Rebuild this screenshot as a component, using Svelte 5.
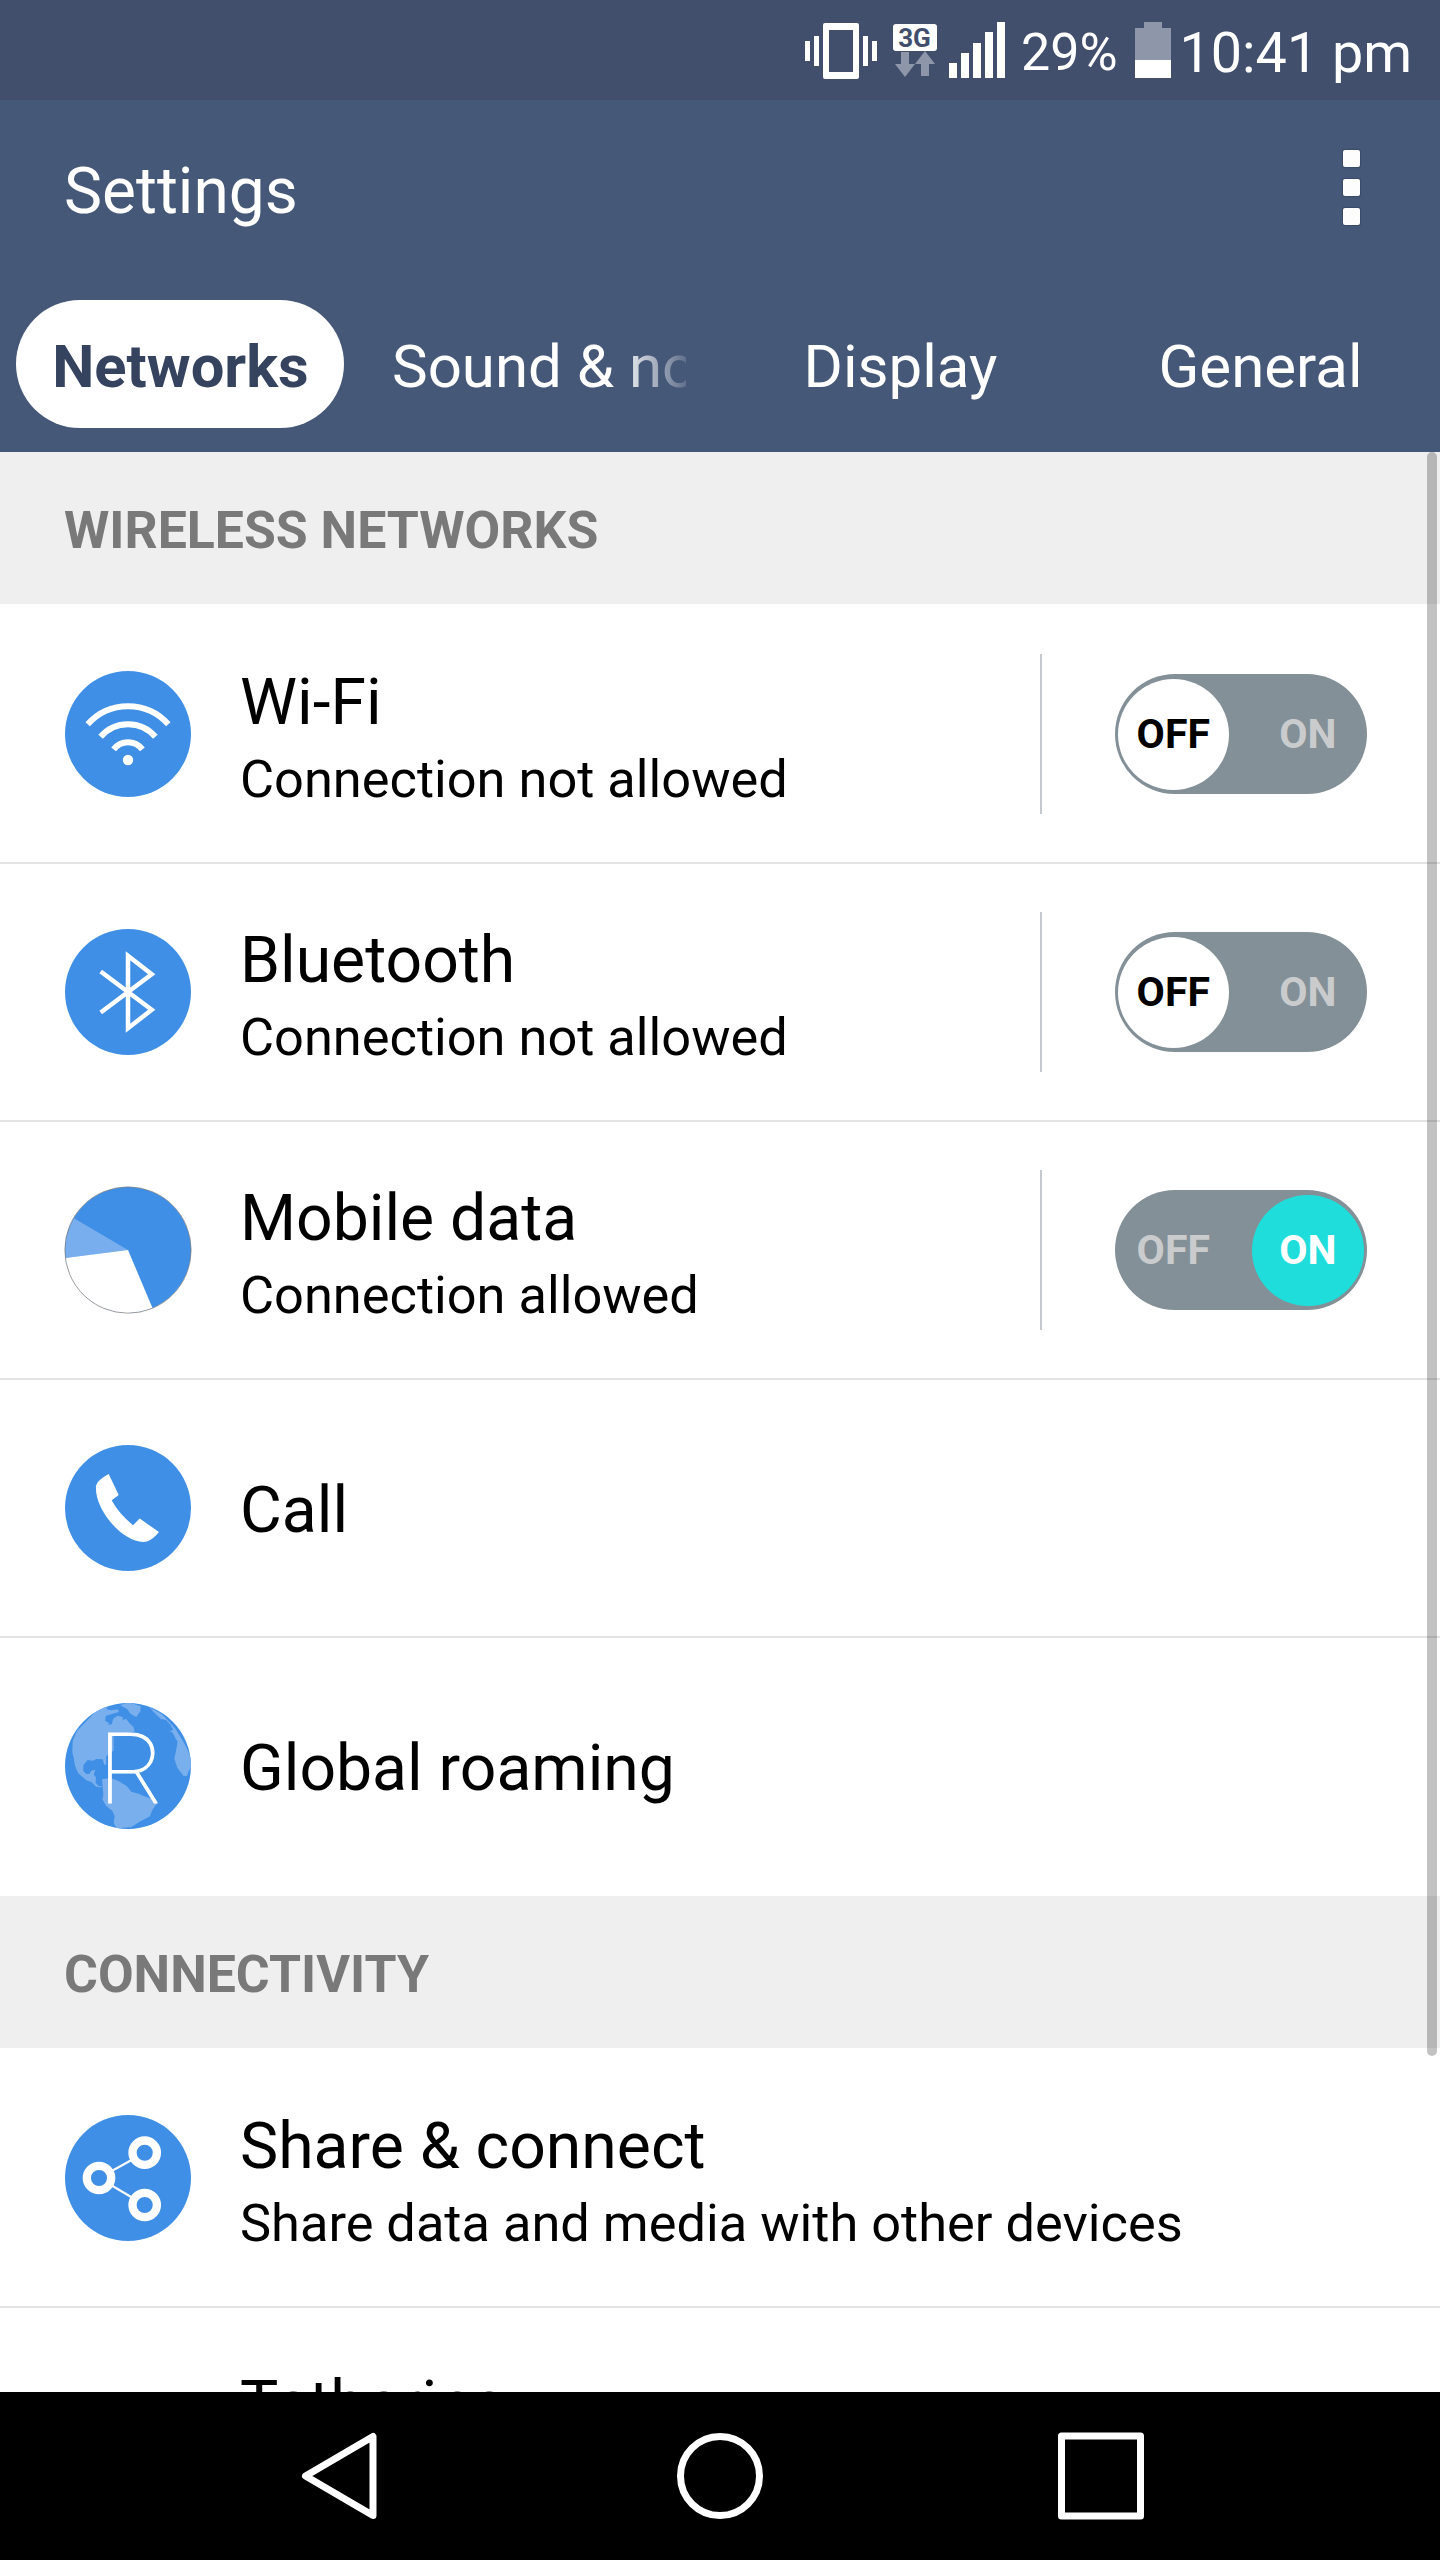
<script lang="ts">
  type IconName = 'wifi' | 'bluetooth' | 'data' | 'call' | 'roaming' | 'share';

  interface Item {
    title: string;
    icon?: IconName;
    summary?: string;
    /** Only rows with a switch set this. */
    on?: boolean;
  }

  interface Section {
    label: string;
    items: Item[];
  }

  const tabs = ['Networks', 'Sound & notification', 'Display', 'General'];
  let activeTab = $state(0);

  let sections: Section[] = $state([
    {
      label: 'WIRELESS NETWORKS',
      items: [
        { title: 'Wi-Fi', icon: 'wifi', summary: 'Connection not allowed', on: false },
        { title: 'Bluetooth', icon: 'bluetooth', summary: 'Connection not allowed', on: false },
        { title: 'Mobile data', icon: 'data', summary: 'Connection allowed', on: true },
        { title: 'Call', icon: 'call' },
        { title: 'Global roaming', icon: 'roaming' }
      ]
    },
    {
      label: 'CONNECTIVITY',
      items: [
        { title: 'Share & connect', icon: 'share', summary: 'Share data and media with other devices' },
        { title: 'Tethering', summary: ' ' }
      ]
    }
  ]);
</script>

{#snippet icon(name: IconName)}
  {#if name === 'wifi'}
    <svg class="icon" viewBox="0 0 126 126" aria-hidden="true">
      <circle class="disc" cx="63" cy="63" r="63" />
      <g fill="none" stroke="#fff" stroke-width="6">
        <path d="M22.7 53.2a54 54 0 0 1 80.6 0" />
        <path d="M35.6 65.8a36 36 0 0 1 54.8 0" />
        <path d="M48.6 78.4a18 18 0 0 1 28.8 0" />
      </g>
      <circle cx="63" cy="89" r="5.2" fill="#fff" />
    </svg>
  {:else if name === 'bluetooth'}
    <svg class="icon" viewBox="0 0 126 126" aria-hidden="true">
      <circle class="disc" cx="63" cy="63" r="63" />
      <path d="m35.7 42.5 51 38.3L63 99.2V26.8l23.7 18.4-51 38.3" fill="none" stroke="#fff" stroke-width="4.5" />
    </svg>
  {:else if name === 'data'}
    <svg class="icon" viewBox="0 0 126 126" aria-hidden="true">
      <circle class="disc" cx="63" cy="63" r="63" />
      <path d="M63 63 9 31.3A63 63 0 0 0 .4 71Z" fill="#78aeed" />
      <path d="M63 63 .4 71A63 63 0 0 0 87.5 121Z" fill="#fff" />
      <circle cx="63" cy="63" r="63.2" fill="none" stroke="#6f6a68" stroke-opacity=".6" stroke-width="1" />
    </svg>
  {:else if name === 'call'}
    <svg class="icon" viewBox="0 0 126 126" aria-hidden="true">
      <circle class="disc" cx="63" cy="63" r="63" />
      <path
        d="M43.7 29 53.7 50l-7 5.3Q54 69 68 80.2l6.7-6.6L94 87Q88 94.5 82 96.5C61 101 29 66 31 41Q31.5 35.5 43.7 29Z"
        fill="#fff"
      />
    </svg>
  {:else if name === 'roaming'}
    <svg class="icon" viewBox="0 0 378 378" aria-hidden="true">
      <clipPath id="globe"><circle cx="189" cy="189" r="189" /></clipPath>
      <circle class="disc" cx="189" cy="189" r="189" />
      <g fill="#79afed" clip-path="url(#globe)">
        <path d="M80 38 103 12l27-10-6 16 12 4 22-3 4 8-19 5-21 7-1 15 10 5-1 6 10-1 5-17 12-9 16 4 0 9 10-4 10 13 13 13 3 13-17 1-10 8-36 5v43l-14 8-9 10 1 22-6 3-5-17-19-1-10 5-16-2-13 16v17l9 9 10-1 5-9 12-3-5 15 7 8-1 17 8 8 14 3-6 2-15-2-13-13-16-6-25-22-9-22-4-23-4-18 1-32 13-32Z" />
        <path d="m165 6 28-8 34 12-1 15-12 17-17-9-10-14Z" />
        <path d="m111 229 25-4 24 9 25 15 14 17 22 6 17 8 31 10 8 10-14 19-8 21-31 16-25 16-29 3-14 4-10-20 3-20-7-15-18-15-12-20 3-14Z" />
        <path d="m252 12 40 22 40 44 30 50 25 57-16 18-5 16-11-1-18-24-9-27 6-29 4-22-9-14-11-1-5-17 12-3-10-17-12-13-15-3-11-10-8-8Z" />
        <path d="m307 83 13 3 9 13-3 8-10-9-8-4Z" fill="#3f8fe6" />
      </g>
      <text class="roaming-letter" x="103" y="299">R</text>
    </svg>
  {:else}
    <svg class="icon" viewBox="0 0 126 126" aria-hidden="true">
      <circle class="disc" cx="63" cy="63" r="63" />
      <path d="M79.7 37.7 34 63l45.7 27" fill="none" stroke="#fff" stroke-width="2.2" />
      <g class="disc" stroke="#fff" stroke-width="8.3">
        <circle cx="34" cy="63" r="12.2" />
        <circle cx="79.7" cy="37.7" r="12.2" />
        <circle cx="79.7" cy="90" r="12.2" />
      </g>
    </svg>
  {/if}
{/snippet}

<div class="screen">
  <div class="status-bar">
    <svg class="vibrate" width="74" height="56" viewBox="0 0 74 56" fill="#fff" aria-hidden="true">
      <path d="M0 18h5v20H0zM9 13h5v30H9zM58 13h5v30h-5zM67 18h5v20h-5z" />
      <path fill-rule="evenodd" d="M20 0h32q2 0 2 2v52q0 2-2 2H20q-2 0-2-2V2q0-2 2-2Zm4 7v42h24V7Z" />
    </svg>
    <svg class="network" width="44" height="56" viewBox="0 0 44 56" aria-hidden="true">
      <rect y="1" width="44" height="27" rx="3" fill="#fff" />
      <text class="network-type" x="21.5" y="24" text-anchor="middle">3G</text>
      <path d="M8 29h8v12h6L12 54 2 41h6zM32 28l10 13h-6v12h-8V41h-6z" fill="#8e96a9" />
    </svg>
    <svg class="signal" width="56" height="56" viewBox="0 0 56 56" fill="#fff" aria-hidden="true">
      <path d="M0 41h8v15H0zM12 31h8v25h-8zM24 21h8v35h-8zM36 10h8v46h-8zM48 0h8v56h-8z" />
    </svg>
    <span class="percent">29%</span>
    <svg class="battery" width="36" height="56" viewBox="0 0 36 56" aria-hidden="true">
      <path d="M9 0h18v6h9v32H0V6h9z" fill="#8e96a9" />
      <path d="M0 38h36v18H0z" fill="#fff" />
    </svg>
    <span class="clock">10:41 pm</span>
  </div>

  <header class="app-bar">
    <h1>Settings</h1>
    <button class="overflow" aria-label="More options">
      <span></span><span></span><span></span>
    </button>
  </header>

  <nav class="tabs">
    {#each tabs as tab, i}
      <button class="tab" class:active={i === activeTab} onclick={() => (activeTab = i)}>
        <span class="tab-label" class:fade={tab.length > 12}>{tab}</span>
      </button>
    {/each}
  </nav>

  <main class="content">
    {#each sections as section}
      <h2>{section.label}</h2>
      <div class="list">
        {#each section.items as item}
          <div class="row">
            <div class="icon-slot">
              {#if item.icon}{@render icon(item.icon)}{/if}
            </div>
            <div class="text">
              <div class="title">{item.title}</div>
              {#if item.summary}<div class="summary">{item.summary}</div>{/if}
            </div>
            {#if item.on !== undefined}
              <div class="switch-slot">
                <button
                  class="switch"
                  class:on={item.on}
                  role="switch"
                  aria-checked={item.on}
                  aria-label={item.title}
                  onclick={() => (item.on = !item.on)}
                >
                  <span class="option off-option">OFF</span>
                  <span class="option on-option">ON</span>
                </button>
              </div>
            {/if}
          </div>
        {/each}
      </div>
    {/each}
    <div class="scrollbar"></div>
  </main>

  <div class="nav-bar">
    <svg width="90" height="90" viewBox="0 0 90 90" aria-label="Back">
      <path d="M79 5.5v79L11.5 45Z" />
    </svg>
    <svg width="90" height="90" viewBox="0 0 90 90" aria-label="Home">
      <circle cx="45" cy="45" r="39.5" />
    </svg>
    <svg width="90" height="90" viewBox="0 0 90 90" aria-label="Recent apps">
      <rect x="5.5" y="5" width="79" height="80" />
    </svg>
  </div>
</div>

<style>
  :global(body) {
    margin: 0;
  }

  .screen {
    display: flex;
    flex-direction: column;
    width: 1440px;
    height: 2560px;
    overflow: hidden;
    background: #fff;
    color: #000;
    font-family: Roboto, sans-serif;
  }

  button {
    padding: 0;
    border: none;
    background: none;
    color: inherit;
    font: inherit;
    cursor: pointer;
  }

  .status-bar {
    display: flex;
    flex: 0 0 100px;
    box-sizing: border-box;
    padding: 22px 20px 0 805px;
    background: #414f6d;
    color: #fff;
    white-space: nowrap;
  }

  .vibrate {
    flex: none;
    margin: 1px 14px 0 0;
  }

  .network {
    flex: none;
    margin: 1px 12px 0 0;
  }

  .network-type {
    fill: #414f6d;
    font-size: 26px;
    font-weight: 700;
  }

  .signal {
    flex: none;
  }

  .percent {
    flex: none;
    width: 114px;
    margin-left: 16px;
    font-size: 52px;
    line-height: 61px;
  }

  .battery {
    flex: none;
  }

  .clock {
    margin-left: 8.5px;
    font-size: 55.7px;
    line-height: 62px;
  }

  .app-bar {
    display: flex;
    flex: 0 0 188px;
    justify-content: space-between;
    background: #465878;
    color: #fff;
  }

  h1 {
    margin: 0;
    padding: 54px 0 0 64px;
    font-size: 64px;
    font-weight: 400;
    line-height: 76px;
  }

  .overflow {
    display: flex;
    flex-direction: column;
    align-self: flex-start;
    gap: 12px;
    margin: 50px 80px 0 0;
  }

  .overflow span {
    width: 17px;
    height: 17px;
    border-radius: 2px;
    background: #fdfdfd;
    box-shadow: 0 0 1px 1px rgba(40, 52, 80, 0.4);
  }

  .tabs {
    display: grid;
    flex: 0 0 164px;
    grid-template-columns: repeat(4, 1fr);
    box-sizing: border-box;
    padding-top: 12px;
    background: #465878;
    color: #fff;
  }

  .tab {
    justify-self: center;
    width: 328px;
    height: 128px;
    border-radius: 64px;
    font-size: 60px;
  }

  .tab.active {
    background: #fff;
    color: #35435f;
    font-size: 59.7px;
    font-weight: 700;
  }

  .tab-label {
    display: block;
    padding: 4px 16px 0 17px;
    line-height: 126px;
    white-space: nowrap;
  }

  .tab-label.fade {
    width: 294px;
    margin-left: 16px;
    padding: 4px 0 0;
    overflow: hidden;
    text-align: left;
    mask-image: linear-gradient(to right, #000 225px, transparent 306px);
  }

  .content {
    position: relative;
    flex: 1;
    min-height: 0;
    overflow: hidden;
  }

  h2 {
    box-sizing: border-box;
    height: 152px;
    margin: 0;
    padding: 5px 0 0 64px;
    background: #efefef;
    color: #797979;
    font-size: 51.8px;
    font-weight: 700;
    line-height: 148px;
  }

  .list {
    padding-top: 2px;
  }

  .row {
    display: flex;
    align-items: center;
    height: 256px;
    border-bottom: 2px solid #e4e4e4;
  }

  .row:last-child {
    border-bottom-color: transparent;
  }

  .icon-slot {
    width: 175px;
    padding-left: 65px;
  }

  .icon {
    display: block;
    width: 126px;
    height: 126px;
    overflow: visible;
  }

  .disc {
    fill: #3f8fe6;
  }

  .roaming-letter {
    fill: #fff;
    stroke: #fff;
    stroke-width: 3px;
    font-size: 296px;
    font-weight: 100;
  }

  .text {
    flex: 1;
    white-space: nowrap;
  }

  .title {
    padding-top: 5px;
    font-size: 64.25px;
    line-height: 75px;
  }

  .summary {
    height: 68px;
    font-size: 52.35px;
    line-height: 78px;
  }

  .switch-slot {
    display: flex;
    align-items: center;
    box-sizing: border-box;
    width: 400px;
    height: 160px;
    padding-left: 73px;
    border-left: 2px solid #c5c8ce;
  }

  .switch {
    display: flex;
    justify-content: space-between;
    box-sizing: border-box;
    width: 252px;
    height: 120px;
    padding: 4.5px 3.5px 4px 2.5px;
    border-radius: 60px;
    background: #839097;
    color: #cacbcd;
    font-size: 41px;
    font-weight: 700;
  }

  .option {
    width: 111.5px;
    height: 111.5px;
    border-radius: 50%;
    line-height: 111px;
    text-align: center;
  }

  .switch:not(.on) .off-option {
    background: #fff;
    color: #000;
  }

  .switch.on .on-option {
    background: #1fdddb;
    color: #fff;
  }

  .scrollbar {
    position: absolute;
    top: 0;
    right: 3px;
    width: 10px;
    height: 1604px;
    border-radius: 5px;
    background: rgba(0, 0, 0, 0.24);
  }

  .nav-bar {
    display: flex;
    flex: 0 0 168px;
    align-items: center;
    justify-content: center;
    gap: 291px;
    background: #000;
  }

  .nav-bar svg {
    fill: none;
    stroke: #fff;
    stroke-width: 7;
    stroke-linejoin: round;
  }
</style>
